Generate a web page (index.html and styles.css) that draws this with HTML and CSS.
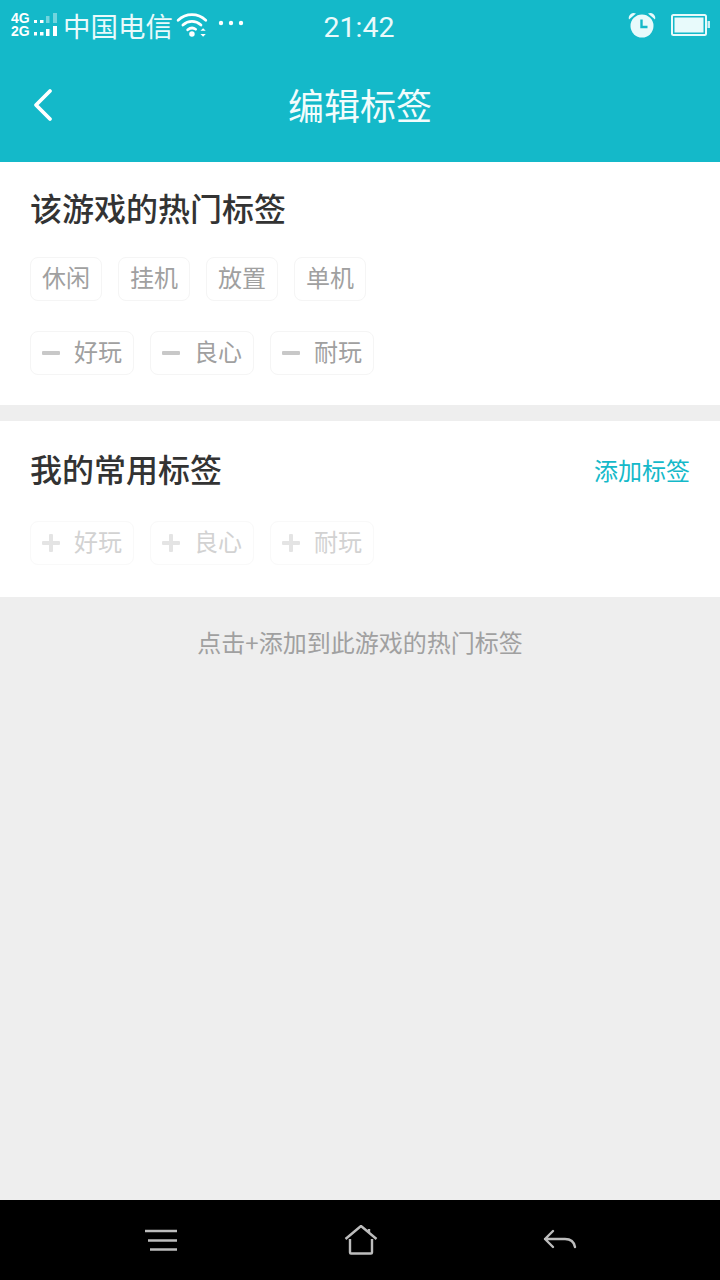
FILE: index.html
```html
<!DOCTYPE html>
<html lang="zh">
<head>
<meta charset="utf-8">
<title>编辑标签</title>
<link rel="stylesheet" href="styles.css">
</head>
<body>
<div class="screen">
  <header class="top">
    <div class="status">
      <div class="status-left">
        <svg class="sig" width="48" height="30" viewBox="0 -2 48 30">
          <g class="sig-text"><text x="0" y="10.500">4G</text><text x="0" y="24">2G</text></g>
          <g fill="#fff">
            <rect x="23" y="8" width="3" height="3"/><rect x="29" y="8" width="3.500" height="3"/>
            <rect x="23" y="20" width="3" height="3.500"/><rect x="29" y="20" width="3.500" height="3.500"/><rect x="35" y="17" width="3.500" height="7"/><rect x="42" y="14" width="4" height="10"/>
          </g>
          <g fill="#fff" opacity=".4"><rect x="35" y="4" width="3.500" height="7"/><rect x="42" y="1" width="4" height="10"/></g>
        </svg>
        <span class="carrier">中国电信</span>
        <svg class="wifi" width="34" height="28" viewBox="0 0 32 26" fill="none" stroke="#fff" stroke-width="2.600" stroke-linecap="round">
          <path d="M2 8.500C9.500 1.500 20.500 1.500 28 8.500"/>
          <path d="M6.500 13C11.500 8.500 18.500 8.500 23.500 13"/>
          <path d="M11 17.500C13.500 15.500 16.500 15.500 18.500 17"/>
          <circle cx="15" cy="21.500" r="2.600" fill="#fff" stroke="none"/>
          <path d="M23 18.500h5l-2.500-2.500zM23 21.500h5l-2.500 2.500z" fill="#fff" stroke="none"/>
        </svg>
        <svg class="dots" width="26" height="6" viewBox="0 0 26 6" fill="#fff"><circle cx="3" cy="3" r="2.200"/><circle cx="13" cy="3" r="2.200"/><circle cx="23" cy="3" r="2.200"/></svg>
      </div>
      <span class="clock">21:42</span>
      <div class="status-right">
        <svg width="30" height="28" viewBox="0 0 30 28">
          <circle cx="15" cy="15" r="11.500" fill="#e8fafb"/>
          <path d="M2 8.500A5 5 0 0 1 9 2.500zM28 8.500A5 5 0 0 0 21 2.500z" fill="#e8fafb"/>
          <path d="M14.500 8.500v7.500h6" fill="none" stroke="#14b9c9" stroke-width="2.400"/>
        </svg>
        <svg width="40" height="24" viewBox="0 0 40 24">
          <rect x="1" y="2" width="34" height="20" rx="1.500" fill="none" stroke="#e8fafb" stroke-width="2"/>
          <rect x="3.500" y="4.500" width="29" height="15" fill="#e8fafb"/>
          <rect x="36.500" y="8" width="2.500" height="7" fill="#cdeff3"/>
        </svg>
      </div>
    </div>
    <div class="title-bar">
      <svg class="back" width="24" height="36" viewBox="0 0 24 36" fill="none" stroke="#fff" stroke-width="3.800" stroke-linecap="round" stroke-linejoin="round"><path d="M19 4L5 18l14 14"/></svg>
      <h1 class="title">编辑标签</h1>
    </div>
  </header>

  <section class="panel panel-hot">
    <h2 class="heading">该游戏的热门标签</h2>
    <div class="tags tags-plain">
      <span class="tag">休闲</span>
      <span class="tag">挂机</span>
      <span class="tag">放置</span>
      <span class="tag">单机</span>
    </div>
    <div class="tags">
      <span class="tag tag-icon"><i class="minus"></i>好玩</span>
      <span class="tag tag-icon"><i class="minus"></i>良心</span>
      <span class="tag tag-icon"><i class="minus"></i>耐玩</span>
    </div>
  </section>

  <section class="panel panel-mine">
    <div class="panel-head">
      <h2 class="heading">我的常用标签</h2>
      <span class="add-link">添加标签</span>
    </div>
    <div class="tags tags-faded">
      <span class="tag tag-icon"><i class="plus"></i>好玩</span>
      <span class="tag tag-icon"><i class="plus"></i>良心</span>
      <span class="tag tag-icon"><i class="plus"></i>耐玩</span>
    </div>
  </section>

  <main class="rest">
    <p class="hint">点击+添加到此游戏的热门标签</p>
  </main>

  <nav class="nav">
    <svg class="nav-menu" width="34" height="24" viewBox="0 0 34 24" fill="none" stroke="#bdbdbd" stroke-width="2.400"><path d="M1 2h32M4 11.500h29M6 20.500h27"/></svg>
    <svg width="34" height="30" viewBox="0 0 34 30" fill="none" stroke="#bdbdbd" stroke-width="2.400" stroke-linejoin="round"><path d="M1.500 14L17 1l15.500 13M25 7.500V4M6 14v13.500a1 1 0 0 0 1 1h20a1 1 0 0 0 1-1V14"/></svg>
    <svg width="34" height="22" viewBox="0 0 34 22" fill="none" stroke="#bdbdbd" stroke-width="2.400" stroke-linecap="round" stroke-linejoin="round"><path d="M10 2L2 10l8 8M2 10h20c5.500 0 9 2.500 10 8"/></svg>
  </nav>
</div>
</body>
</html>
```

FILE: styles.css
```css
* { box-sizing: border-box; }
html, body { margin: 0; padding: 0; }
body {
  font-family: "Noto Sans CJK SC", "Noto Sans", sans-serif;
  background: #eeeeee;
}
.screen {
  width: 720px;
  height: 1280px;
  display: flex;
  flex-direction: column;
  overflow: hidden;
}
.top {
  height: 162px;
  background: #14b9c9;
  color: #fff;
  flex: none;
}
.status {
  height: 50px;
  position: relative;
  display: flex;
  align-items: center;
  justify-content: space-between;
  padding: 0 9px 0 11px;
}
.status-left { display: flex; align-items: center; }
.sig { display: block; }
.sig-text { font: 700 14px "Liberation Sans", sans-serif; fill: #fff; }
.carrier { font-size: 27.500px; line-height: 46px; margin-left: 4px; color: #eafafb; }
.wifi { margin-left: 3px; }
.dots { margin-left: 8px; margin-bottom: 4px; }
.clock {
  position: absolute;
  left: 0;
  right: 2px;
  top: 0;
  text-align: center;
  font: 28.500px/55px Roboto, sans-serif;
  color: #eafafb;
}
.status-right { display: flex; align-items: center; gap: 14px; }
.title-bar {
  height: 112px;
  position: relative;
  display: flex;
  align-items: center;
  justify-content: center;
  padding-bottom: 4px;
}
.back { position: absolute; left: 31px; top: 37px; }
.title { margin: 0; font-size: 36px; font-weight: 400; line-height: 48px; color: #f2fcfc; }
.panel { background: #fff; padding: 0 30px; flex: none; }
.panel-hot { height: 243px; margin-bottom: 16px; padding-top: 22px; }
.panel-mine { height: 176px; padding-top: 24px; }
.panel-head { display: flex; align-items: center; justify-content: space-between; }
.heading { margin: 0; font-size: 32px; font-weight: 500; line-height: 46px; color: #333; }
.add-link { font-size: 24px; line-height: 40px; padding-top: 3px; color: #14b9c9; }
.tags { display: flex; gap: 16px; margin-top: 30px; }
.tags-plain { margin-top: 27px; }
.panel-mine .tags { margin-top: 30px; }
.tag {
  height: 44px;
  padding: 0 11px 4px;
  display: flex;
  align-items: center;
  border: 1px solid #f5f5f5;
  border-radius: 8px;
  font-size: 24px;
  line-height: 38px;
  color: #a0a0a0;
}
.minus, .plus { display: block; position: relative; width: 18px; height: 18px; margin: 4px 14px 0 0; }
.minus::before, .plus::before {
  content: "";
  position: absolute;
  left: 0;
  top: 7px;
  width: 18px;
  height: 4px;
  border-radius: 1px;
  background: #c8c8c8;
}
.plus::after {
  content: "";
  position: absolute;
  left: 7px;
  top: 0;
  width: 4px;
  height: 18px;
  border-radius: 1px;
  background: #c8c8c8;
}
.tags-faded .tag { border-color: #f9f9f9; color: #d2d2d2; }
.tags-faded .plus::before, .tags-faded .plus::after { background: #e4e4e4; }
.rest { flex: 1; background: #eeeeee; }
.hint { margin: 27px 0 0; text-align: center; font-size: 24px; line-height: 36px; color: #a0a0a0; }
.nav {
  height: 80px;
  flex: none;
  background: #000;
  display: flex;
  align-items: center;
  justify-content: space-between;
  padding: 0 143px 0 144px;
}
.nav-menu { margin-top: 2px; }
```
